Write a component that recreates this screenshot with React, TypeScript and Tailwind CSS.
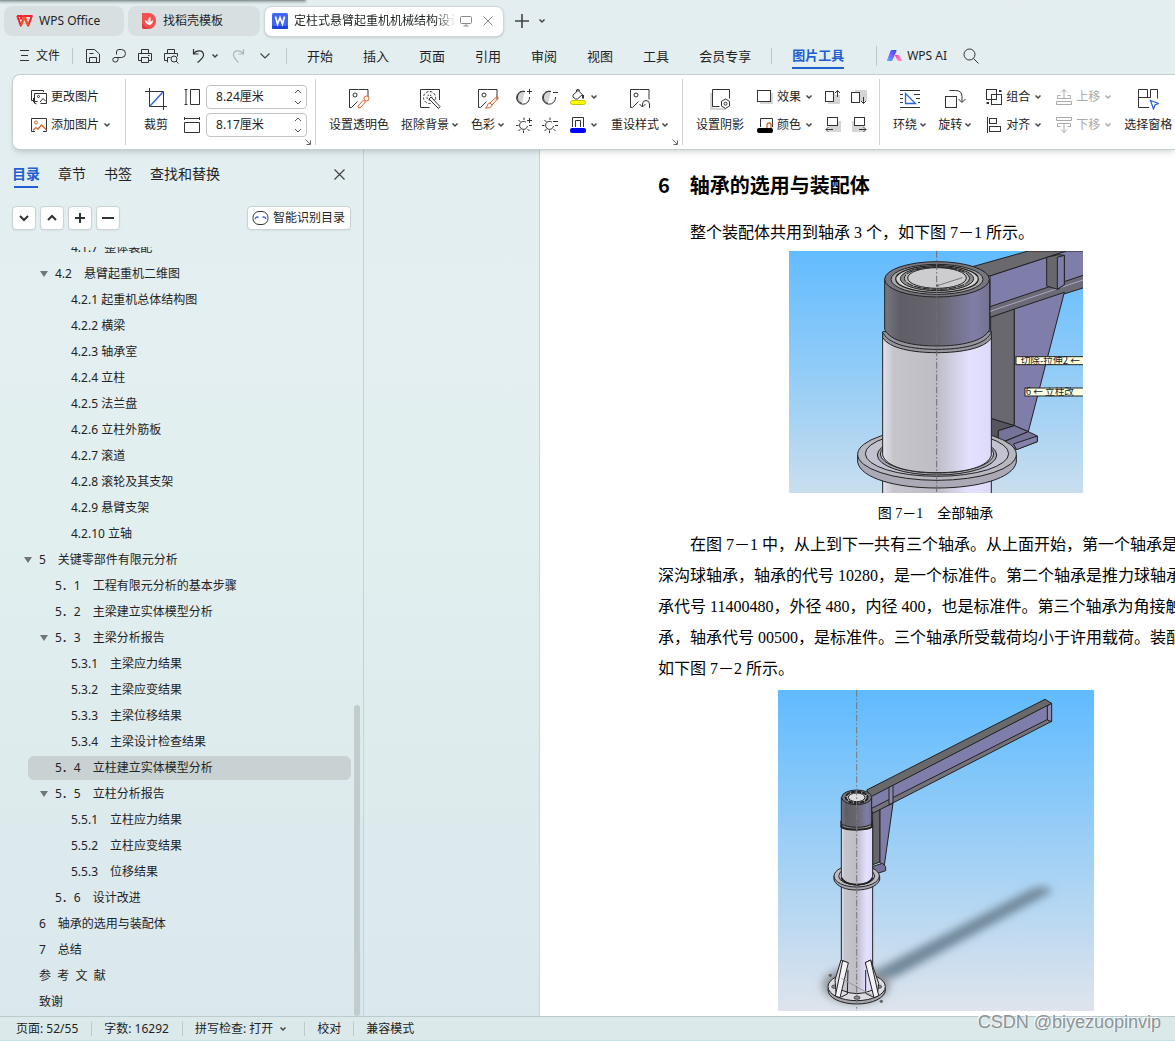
import React from "react";

type Kids = { children?: React.ReactNode };

function Ico({ s = 16, c = "#333333", children }: Kids & { s?: number; c?: string }) {
  return (
    <svg width={s} height={s} viewBox={`0 0 ${s} ${s}`} fill="none" stroke={c} strokeWidth="1" className="shrink-0" aria-hidden="true">
      {children}
    </svg>
  );
}

function Chev({ c = "#444444" }: { c?: string }) {
  return (
    <svg width="8" height="6" viewBox="0 0 8 6" fill="none" stroke={c} strokeWidth="1.5" className="shrink-0" aria-hidden="true">
      <path d="M1.5 1.5 4 4 6.5 1.5" />
    </svg>
  );
}

function Big({ icon, label, chev }: { icon: React.ReactNode; label: string; chev?: boolean }) {
  return (
    <button type="button" className="flex shrink-0 flex-col items-center whitespace-nowrap">
      <span className="flex h-8 items-center">{icon}</span>
      <span className="flex h-5 items-center gap-0.5">
        {label}
        {chev && <Chev />}
      </span>
    </button>
  );
}

function Small({ icon, label, chev, muted }: { icon: React.ReactNode; label: string; chev?: boolean; muted?: boolean }) {
  return (
    <button type="button" disabled={muted} className={`flex h-7 items-center gap-1 whitespace-nowrap ${muted ? "text-[#a9a9a9]" : ""}`}>
      {icon}
      {label}
      {chev && <Chev c={muted ? "#a9a9a9" : "#444444"} />}
    </button>
  );
}

function IconButton({ label, children, chev }: Kids & { label: string; chev?: boolean }) {
  return (
    <button type="button" aria-label={label} className="flex h-7 items-center gap-1">
      {children}
      {chev && <Chev />}
    </button>
  );
}

function Stack({ children }: Kids) {
  return <div className="flex shrink-0 flex-col items-start">{children}</div>;
}

function Group({ children, launcher, pad }: Kids & { launcher?: boolean; pad: string }) {
  return (
    <div className={`relative my-1 flex h-[66px] shrink-0 border-r border-[#d0d3d3] pt-1 ${pad}`}>
      {children}
      {launcher && (
        <button type="button" aria-label="更多设置" className="absolute right-1 bottom-0">
          <svg width="6" height="6" viewBox="0 0 6 6" fill="none" stroke="#666666" aria-hidden="true">
            <path d="M.5.5 5 5M5.5 1.5v4h-4" />
          </svg>
        </button>
      )}
    </div>
  );
}

function Spin({ label, value, children }: Kids & { label: string; value: string }) {
  return (
    <label className="flex h-7 items-center gap-1.5">
      {children}
      <span className="flex h-6 w-[101px] items-center rounded border border-[#bfc4c4] bg-white pr-1 pl-[9px]">
        <input aria-label={label} defaultValue={value} className="w-full min-w-0 bg-transparent outline-none" />
        <svg width="8" height="16" viewBox="0 0 8 16" fill="none" stroke="#555555" className="shrink-0" aria-hidden="true">
          <path d="M1 4 4 1 7 4M1 12l3 3 3-3" />
        </svg>
      </span>
    </label>
  );
}

const Sep = ({ cls }: { cls: string }) => <div className={`w-px shrink-0 bg-[#bccaca] ${cls}`} />;

function TitleTabs() {
  return (
    <header className="relative flex h-[38px] shrink-0 items-center gap-1 px-1 pt-1">
      <div className="absolute top-0 left-0 h-px w-[305px] bg-[#8c9899] shadow-[0_0_3px_1px_#8c9899]" />
      <button type="button" className="flex h-[30px] w-[120px] items-center gap-1.5 rounded-lg bg-[#d7dfe1] pl-3">
        <svg width="17" height="12" viewBox="0 0 17 12" aria-hidden="true">
          <path d="M1 1h5.2l-1.7 3.5M1.2 1l3.6 9.6L8.4 2l3.8 8.6L15.8 1H8l2 3.8" fill="none" stroke="#f5222d" strokeWidth="2" strokeLinejoin="round" />
          <path d="m5 10.4 3.4-8.2 3.7 8.2" fill="none" stroke="#f9541c" strokeWidth="1.8" strokeLinejoin="round" />
        </svg>
        WPS Office
      </button>
      <button type="button" className="flex h-[30px] w-[132px] items-center gap-1.5 rounded-lg bg-[#d7dfe1] pl-[13px]">
        <svg width="16" height="16" viewBox="0 0 16 16" aria-hidden="true">
          <path d="M1 0h7a7 8 0 0 1 0 16H3a2 2 0 0 1-2-2z" fill="#f4504e" />
          <path d="M1 10l6 6H3a2 2 0 0 1-2-2z" fill="#e13a3c" />
          <path d="M8 12C5 11 4 9 4 7c2 .5 3 1.500 3.500 3C7 7 7.500 4.500 9 3.500c1 1.500.8 3.500 0 5.500 1-1 1.800-1.500 3-1.500C12 10 10.500 12 8 12z" fill="#fff" />
        </svg>
        找稻壳模板
      </button>
      <div className="flex h-[31px] w-[240px] items-center rounded-lg border border-[#ccd8da] bg-white pr-2.5 pl-[7px] shadow-sm">
        <svg width="16" height="16" viewBox="0 0 16 16" aria-hidden="true">
          <rect width="16" height="16" rx="1.500" fill="#3f66f5" />
          <path d="M0 13h16v1.500a1.500 1.500 0 0 1-1.500 1.500h-13A1.500 1.500 0 0 1 0 14.500z" fill="#1d45d8" />
          <path d="m3.500 3.500 2 7.500L8 4.500 10.500 11l2-7.500" fill="none" stroke="#fff" strokeWidth="1.700" />
        </svg>
        <span className="ml-1.5 w-[162px] overflow-hidden whitespace-nowrap [mask-image:linear-gradient(to_right,black_88%,transparent)]">定柱式悬臂起重机机械结构设计</span>
        <svg width="12" height="12" viewBox="0 0 12 12" fill="none" stroke="#858b8d" className="ml-1" aria-hidden="true">
          <rect x=".5" y="1.500" width="11" height="7" rx="1" />
          <path d="M6 8.500V11M3.500 11h5" />
        </svg>
        <button type="button" aria-label="关闭标签" className="ml-auto">
          <svg width="10" height="10" viewBox="0 0 10 10" stroke="#858b8d" aria-hidden="true"><path d="m.5.5 9 9m0-9-9 9" /></svg>
        </button>
      </div>
      <button type="button" aria-label="新建标签" className="ml-[7px]">
        <svg width="14" height="14" viewBox="0 0 14 14" stroke="#444" strokeWidth="1.600" aria-hidden="true"><path d="M7 0v14M0 7h14" /></svg>
      </button>
      <button type="button" aria-label="标签列表" className="ml-[5px]"><Chev /></button>
    </header>
  );
}

const menus = ["开始", "插入", "页面", "引用", "审阅", "视图", "工具", "会员专享"];

function MenuBar() {
  return (
    <nav className="flex h-[35px] shrink-0 items-center">
      <button type="button" className="ml-[19px] flex shrink-0 items-center gap-1.5">
        <Ico s={11}><path d="M1 .5h9M2 5.500h7M1 10.500h9" /></Ico>
        文件
      </button>
      <Sep cls="ml-3 h-4" />
      <button type="button" aria-label="保存" className="ml-3"><Ico><path d="M1.500 1.500h8l5 4.500v8.500h-13zM4.500 14.500v-5h7v5M4.500 5.500h4" /></Ico></button>
      <button type="button" aria-label="输出为PDF" className="ml-2.5"><Ico><path d="M5.500 6.500V4A2.500 2.500 0 0 1 8 1.500h2.500a4 4 0 0 1 0 8H4A2.200 2.200 0 0 0 4 14h.5A2.500 2.500 0 0 0 7 11.500v-2" /></Ico></button>
      <button type="button" aria-label="打印" className="ml-2.5"><Ico><path d="M4.500 5.500v-4h7v4M4.500 12.500h-3v-7h13v7h-3M4.500 9.500h7v5h-7zM11 7.500h1.500" /></Ico></button>
      <button type="button" aria-label="打印预览" className="ml-2.5"><Ico><path d="M4.500 5.500v-4h7v4M4.500 12.500h-3v-7h13v3M4.500 14.500v-5h3" /><circle cx="11" cy="11" r="3" /><path d="m13 13 2.500 2.500" /></Ico></button>
      <button type="button" aria-label="撤销" className="ml-3"><Ico><path d="M2.500 1v5h5M2.500 6C5 2 12.500 1.500 12.500 7c0 3-2.500 4.500-6 7.500" strokeWidth="1.200" /></Ico></button>
      <button type="button" aria-label="撤销列表" className="ml-1"><Chev /></button>
      <button type="button" aria-label="恢复" className="ml-3"><Ico c="#a9b8b8"><path d="M12.500 1v5h-5M12.500 6C10 2 2.500 1.500 2.500 7c0 3 2.500 4.500 5 7.500" strokeWidth="1.200" /></Ico></button>
      <button type="button" aria-label="自定义快速访问" className="ml-[13px]">
        <svg width="10" height="6" viewBox="0 0 10 6" fill="none" stroke="#444" strokeWidth="1.200" aria-hidden="true"><path d="m.5.5 4.500 4.500L9.500.5" /></svg>
      </button>
      <Sep cls="ml-4 h-4" />
      <div className="ml-5 flex shrink-0 items-center gap-[30px] text-[13px]">
        {menus.map((m) => <button type="button" key={m}>{m}</button>)}
      </div>
      <Sep cls="ml-5 h-4" />
      <button type="button" className="ml-5 h-[26px] shrink-0 border-b-2 border-[#1f5fd0] text-[13px] leading-[18px] font-bold text-[#1f5fd0]">图片工具</button>
      <Sep cls="ml-8 h-5" />
      <button type="button" className="ml-2.5 flex shrink-0 items-center gap-1">
        <svg width="16" height="12" viewBox="0 0 16 12" aria-hidden="true">
          <defs>
            <linearGradient id="aiA" x1="1" y1="0" x2="0" y2="1"><stop offset="0" stopColor="#2b4dff" /><stop offset=".5" stopColor="#7a5cff" /><stop offset="1" stopColor="#39c6ff" /></linearGradient>
            <linearGradient id="aiB" x1="0" y1="0" x2="1" y2="1"><stop offset="0" stopColor="#ff3fa0" /><stop offset="1" stopColor="#ff9ad8" /></linearGradient>
          </defs>
          <path d="M4.500 0H9q1 0 .5 1L5 11H.5q-.8 0-.4-1L3.500 1q.3-1 1-1z" fill="url(#aiA)" />
          <path d="M7.500 5h3.500q1 0 1.500 1l3 5H11z" fill="url(#aiB)" />
        </svg>
        WPS AI
      </button>
      <button type="button" aria-label="搜索" className="ml-4"><Ico><circle cx="6.500" cy="6.500" r="5.500" /><path d="m10.500 10.500 5 5" /></Ico></button>
    </nav>
  );
}

const picture = <><path d="M10.500 1.500h9.500v10M1.500 19.500v-18h9M1.500 19.500h2l6-6" /><circle cx="7" cy="7" r="2" /></>;

function Ribbon() {
  return (
    <section aria-label="图片工具" className="relative z-10 mt-px ml-3 flex h-[76px] shrink-0 overflow-hidden rounded-l-lg border border-r-0 border-[#c3d0d0] bg-white shadow-md">
      <Group pad="w-[113px] pl-[18px]">
        <Stack>
          <Small label="更改图片" icon={<Ico><path d="M12.500 3V1.500h-12v10h2M3.500 14.500v-10h12v10h-6M2.500 9v4l3 2M2.500 12.500h4M9 13l3-3.500 3 3" /><circle cx="7.500" cy="7.500" r="1" /></Ico>} />
          <Small label="添加图片" chev icon={<Ico><path d="M4 14.500H.5v-13h15v13H12" /><circle cx="5" cy="5.500" r="1.500" stroke="#d4622a" /><path d="m2 13.500 3-3 2 1.500 3.500-4 5 5" stroke="#d4622a" strokeWidth="1.300" /></Ico>} />
        </Stack>
      </Group>
      <Group pad="gap-4 pl-[18px] pr-2" launcher>
        <Big label="裁剪" icon={<Ico s={22}><path d="M4.500 0v18.500H22M0 3.500h18.500V22" /><path d="m5 18 13-14" stroke="#2f62e0" strokeWidth="1.400" /></Ico>} />
        <Stack>
          <Spin label="高度" value="8.24厘米"><Ico><path d="M.5 .5h3M.5 15.500h3M2 .5v15M6.500.500h9v15h-9z" /></Ico></Spin>
          <Spin label="宽度" value="8.17厘米"><Ico><path d="M.5 0v3M15.500 0v3M.5 1.500h15M.5 5.500h15v10H.5z" /></Ico></Spin>
        </Stack>
      </Group>
      <Group pad="pl-[13px] pr-[13px]" launcher>
        <Big label="设置透明色" icon={<Ico s={22}>{picture}<path d="m10 18 5.500-6 2 2-5.500 6q-2 1-2-2z" stroke="#d4622a" /><circle cx="18.500" cy="10.500" r="2.500" stroke="#d4622a" fill="#fff" /></Ico>} />
        <div className="w-3 shrink-0" />
        <Big label="抠除背景" chev icon={<Ico s={22}><path d="M20.500 12V1.500h-19v18h9" /><circle cx="10.500" cy="9.500" r="6" strokeDasharray="2.500 1.500" /><circle cx="10.500" cy="9.500" r="2.500" strokeDasharray="2 1" /><path d="m10 11 2-2 9 9.500-1.500 2z" fill="#fff" /></Ico>} />
        <div className="w-3 shrink-0" />
        <Big label="色彩" chev icon={<Ico s={22}>{picture}<path d="m13 15 7-6.500 1.500 1.500-6.500 7M13 15l2 2q-1 3.500-6.500 3 2-1 2-3 .5-2 2.500-2z" stroke="#d4622a" /></Ico>} />
        <div className="w-[11px] shrink-0" />
        <Stack>
          <IconButton label="增加对比度"><Ico><path d="M9 2.500a6 6 0 0 0-3 12" fill="#d4d6d6" /><path d="M9 2.500A6.500 6.500 0 1 0 13.500 8M13.500 0v5M11 2.500h5" /></Ico></IconButton>
          <IconButton label="增加亮度"><Ico><path d="M10 5.200A4 4 0 1 0 11.500 9M8 .5V3M2.500 3l2 2M0 8.500h2.500M2.500 14l2-2M7.500 13.500V16M11.500 12l2 2M13.500 1v5M11 3.500h5M13 8.500h3" /></Ico></IconButton>
        </Stack>
        <div className="w-2.5 shrink-0" />
        <Stack>
          <IconButton label="降低对比度"><Ico><path d="M9 2.500a6 6 0 0 0-3 12" fill="#d4d6d6" /><path d="M9 2.500A6.500 6.500 0 1 0 13.500 8M11 3.500h5" /></Ico></IconButton>
          <IconButton label="降低亮度"><Ico><path d="M10 5.200A4 4 0 1 0 11.500 9M8 .5V3M2.500 3l2 2M0 8.500h2.500M2.500 14l2-2M7.500 13.500V16M11.500 12l2 2M11 4.500h5M13 8.500h3" /></Ico></IconButton>
        </Stack>
        <div className="w-3 shrink-0" />
        <Stack>
          <IconButton label="填充颜色" chev><Ico><path d="m3 6 5-4.500 4.500 4-5 4.500H5.500L3 8zM6.500 3V1l2-1 1 2" /><path d="M13 6v3.500" strokeWidth="2" /><rect x=".5" y="11.500" width="15" height="4" rx="2" fill="#ffff00" stroke="#c4c400" /></Ico></IconButton>
          <IconButton label="轮廓颜色" chev><Ico><path d="M2.500 10V.5h11V10M5.500 10V3.500h5V10" /><rect x="0" y="11" width="16" height="5" rx="2" fill="#0000ff" stroke="none" /></Ico></IconButton>
        </Stack>
        <div className="w-[13px] shrink-0" />
        <Big label="重设样式" chev icon={<Ico s={22}>{picture}<path d="m10.500 16 3 3 3-3M13.500 18.500v-2.500a3.500 3.500 0 0 1 7 0V20" /></Ico>} />
      </Group>
      <Group pad="pl-[13px] pr-3">
        <Big label="设置阴影" icon={<Ico s={22}><path d="M1 5h3v15h13v2H1z" fill="#d4d6d6" stroke="none" /><path d="M10.500 18.500h-7v-17h17v9" /><path d="m16.500 11 4 2.300v4.700l-4 2.500-4-2.500v-4.700z" fill="#fff" /><circle cx="16.500" cy="15.700" r="1.500" /></Ico>} />
        <div className="w-[13px] shrink-0" />
        <Stack>
          <Small label="效果" chev icon={<Ico><path d="M3 4h13v11H3z" fill="#d4d6d6" stroke="none" /><rect x=".5" y="1.500" width="13" height="11" fill="#fff" /></Ico>} />
          <Small label="颜色" chev icon={<Ico><path d="M3.500 10V1.500h12V10" /><path d="M10 11V8a2 2 0 0 1 4 0v3" stroke="#d4622a" strokeWidth="1.300" /><rect x="0" y="11" width="16" height="5" rx="2" fill="#000" stroke="none" /></Ico>} />
        </Stack>
        <div className="w-3 shrink-0" />
        <Stack>
          <IconButton label="阴影上移"><Ico><path d="M3 4h12v11H3z" fill="#d4d6d6" stroke="none" /><rect x=".5" y="2.500" width="8" height="10" fill="#fff" /><path d="M10 0h6v6h-6z" fill="#fff" stroke="none" /><path d="M12.500 8V1.500M10 4l2.500-2.500L15 4" /></Ico></IconButton>
          <IconButton label="阴影左移"><Ico><path d="M4 4h12v11H4z" fill="#d4d6d6" stroke="none" /><rect x="2.500" y=".5" width="10" height="8" fill="#fff" /><path d="M8 12.500H1M3.500 10 1 12.500 3.500 15" /></Ico></IconButton>
        </Stack>
        <div className="w-2.5 shrink-0" />
        <Stack>
          <IconButton label="阴影下移"><Ico><path d="M4 1h12v11H4z" fill="#d4d6d6" stroke="none" /><rect x=".5" y="3.500" width="8" height="10" fill="#fff" /><path d="M12.500 8v6.500M10 12l2.500 2.500L15 12" /></Ico></IconButton>
          <IconButton label="阴影右移"><Ico><path d="M1 4h12v11H1z" fill="#d4d6d6" stroke="none" /><rect x="3.500" y=".5" width="10" height="8" fill="#fff" /><path d="M8 12.500h7M12.500 10l2.500 2.500L12.500 15" /></Ico></IconButton>
        </Stack>
      </Group>
      <div className="my-1 flex shrink-0 pt-1 pl-[13px]">
        <Big label="环绕" chev icon={<Ico s={22}><path d="M1 2.500h20M1 19.500h20M1 6.500h3M1 10.500h3M1 14.500h3M15 6.500h6M17 10.500h4M19 14.500h2" /><path d="m6.500 5.500 10 10h-10z" stroke="#2f62e0" strokeWidth="1.300" /></Ico>} />
        <div className="w-[11px] shrink-0" />
        <Big label="旋转" chev icon={<Ico s={22}><rect x="1.500" y="8.500" width="11" height="11" /><path d="M5.500 2.500h6q6.500 0 6.500 6V14M14.500 11l3.500 3.500 3.500-3.500" /></Ico>} />
        <div className="w-3.5 shrink-0" />
        <Stack>
          <Small label="组合" chev icon={<Ico><rect x=".5" y=".5" width="10" height="10" /><rect x="5.500" y="5.500" width="10" height="10" /><path d="M13 2h2.500M.5 14H3" strokeWidth="2" /></Ico>} />
          <Small label="对齐" chev icon={<Ico><path d="M1.500 0v16" /><rect x="3.500" y="1.500" width="7" height="5" /><rect x="3.500" y="9.500" width="11" height="5" /></Ico>} />
        </Stack>
        <div className="w-3.5 shrink-0" />
        <Stack>
          <Small label="上移" chev muted icon={<Ico c="#a9a9a9"><path d="M.5 12.500h15v3H.5zM4.500 6.500h-3v3h13v-3h-3M8 9V.5M5 3.500l3-3 3 3" /></Ico>} />
          <Small label="下移" chev muted icon={<Ico c="#a9a9a9"><path d="M.5.5h15v3H.5zM4.500 9.500h-3v-3h13v3h-3M8 7v8.500M5 12.500l3 3 3-3" /></Ico>} />
        </Stack>
        <div className="w-3 shrink-0" />
        <Big label="选择窗格" icon={<Ico s={22}><path d="M12 19.500H1.500v-18h9v8M1.500 9.500h12v-8h7v9" /><path d="m13.500 12.500 8 3-3.500 1.500-1.500 4z" stroke="#2f62e0" strokeWidth="1.300" /></Ico>} />
      </div>
    </section>
  );
}

type Row = { t: string; d: number; open?: boolean; on?: boolean };
const rows: Row[] = [
  { t: "4.1.7  整体装配", d: 2 },
  { t: "4.2　悬臂起重机二维图", d: 1, open: true },
  { t: "4.2.1 起重机总体结构图", d: 2 },
  { t: "4.2.2 横梁", d: 2 },
  { t: "4.2.3 轴承室", d: 2 },
  { t: "4.2.4 立柱", d: 2 },
  { t: "4.2.5 法兰盘", d: 2 },
  { t: "4.2.6 立柱外筋板", d: 2 },
  { t: "4.2.7 滚道", d: 2 },
  { t: "4.2.8 滚轮及其支架", d: 2 },
  { t: "4.2.9 悬臂支架", d: 2 },
  { t: "4.2.10 立轴", d: 2 },
  { t: "5　关键零部件有限元分析", d: 0, open: true },
  { t: "5．1　工程有限元分析的基本步骤", d: 1 },
  { t: "5．2　主梁建立实体模型分析", d: 1 },
  { t: "5．3　主梁分析报告", d: 1, open: true },
  { t: "5.3.1　主梁应力结果", d: 2 },
  { t: "5.3.2　主梁应变结果", d: 2 },
  { t: "5.3.3　主梁位移结果", d: 2 },
  { t: "5.3.4　主梁设计检查结果", d: 2 },
  { t: "5．4　立柱建立实体模型分析", d: 1, on: true },
  { t: "5．5　立柱分析报告", d: 1, open: true },
  { t: "5.5.1　立柱应力结果", d: 2 },
  { t: "5.5.2　立柱应变结果", d: 2 },
  { t: "5.5.3　位移结果", d: 2 },
  { t: "5．6　设计改进", d: 1 },
  { t: "6　轴承的选用与装配体", d: 0 },
  { t: "7　总结", d: 0 },
  { t: "参  考  文  献", d: 0 },
  { t: "致谢", d: 0 },
];
const indent = ["pl-[11px]", "pl-[27px]", "pl-[43px]"];

function Square({ label, d }: { label: string; d: string }) {
  return (
    <button type="button" aria-label={label} className="flex size-6 items-center justify-center rounded border border-[#c9d3d4] bg-white shadow-xs">
      <svg width="12" height="12" viewBox="0 0 12 12" fill="none" stroke="#333" strokeWidth="2" aria-hidden="true"><path d={d} /></svg>
    </button>
  );
}

function Sidebar() {
  return (
    <aside className="flex w-[364px] shrink-0 flex-col border-r border-[#cfcfd0]">
      <div className="flex items-start gap-[18px] pt-3 pl-3 text-sm leading-6">
        <button type="button" className="flex flex-col items-center font-bold text-[#1f5fd0]">
          目录
          <span className="h-0.5 w-6 bg-[#1f5fd0]" />
        </button>
        <button type="button">章节</button>
        <button type="button">书签</button>
        <button type="button">查找和替换</button>
        <button type="button" aria-label="关闭" className="mr-[18px] ml-auto flex h-6 items-center">
          <svg width="11" height="11" viewBox="0 0 11 11" stroke="#444" strokeWidth="1.200" aria-hidden="true"><path d="m.5.500 10 10m0-10-10 10" /></svg>
        </button>
      </div>
      <div className="flex items-center gap-1 pt-[18px] pr-3 pl-3">
        <Square label="全部展开" d="m2 4 4 4 4-4" />
        <Square label="全部收起" d="m2 8 4-4 4 4" />
        <Square label="提升级别" d="M6 1v10M1 6h10" />
        <Square label="降低级别" d="M0 6h12" />
        <button type="button" className="ml-auto flex h-6 items-center gap-1 rounded border border-[#c9d3d4] bg-white pr-[5px] pl-1 shadow-xs">
          <svg width="17" height="16" viewBox="0 0 17 16" fill="none" stroke="#333" aria-hidden="true">
            <rect x="1" y="1.500" width="15" height="13" rx="6" />
            <path d="M3 9q1.500-3 3.500-1.500M14 9q-1.500-3-3.500-1.500" stroke="#2f62e0" strokeWidth="1.300" />
          </svg>
          智能识别目录
        </button>
      </div>
      <div className="mt-[17px] flex min-h-0 flex-1 pr-[3px] pl-6">
        <ul className="min-w-0 flex-1 overflow-hidden pl-1">
          {rows.map((r, i) => (
            <li key={r.t} className={i === 0 ? "-mt-[11px] h-[26px]" : "h-[26px]"}>
              <a href="#outline" className={`relative flex h-6 items-center rounded-md whitespace-pre ${indent[r.d]} ${r.on ? "bg-[#c8d2d3]" : ""}`}>
                {r.open && <span className="absolute -ml-[15px] border-x-4 border-t-[6px] border-x-transparent border-t-[#707577]" />}
                {r.t}
              </a>
            </li>
          ))}
        </ul>
        <div className="ml-[3px] flex w-1.5 flex-col justify-end">
          <div className="h-[36%] min-h-[311px] rounded-full bg-[#c3cccd]" />
        </div>
      </div>
    </aside>
  );
}

function BearingFigure() {
  return (
    <svg width="294" height="242" viewBox="27 33 882 726" stroke="#222" strokeWidth="3" role="img" aria-label="立柱轴承三维图" className="mx-auto mt-[3px] block">
      <defs>
        <linearGradient id="sky1" x1="0" y1="0" x2="0" y2="1"><stop offset="0" stopColor="#62bcff" /><stop offset=".5" stopColor="#92ccf7" /><stop offset="1" stopColor="#c9deee" /></linearGradient>
        <linearGradient id="col" x1="0" x2="1"><stop offset="0" stopColor="#e2e2ee" /><stop offset=".1" stopColor="#c6c5cb" /><stop offset=".5" stopColor="#bebdc6" /><stop offset=".8" stopColor="#e3e1ff" /><stop offset="1" stopColor="#dcdaf8" /></linearGradient>
        <linearGradient id="cap" x1="0" x2="1"><stop offset="0" stopColor="#77777f" /><stop offset=".15" stopColor="#5f5e66" /><stop offset=".5" stopColor="#67666e" /><stop offset=".85" stopColor="#807ea6" /><stop offset="1" stopColor="#73728f" /></linearGradient>
      </defs>
      <rect x="27" y="33" width="882" height="726" fill="url(#sky1)" stroke="none" />
      <path d="M560 85 745 33H860L630 108z" fill="#69696e" />
      <path d="M630 108 860 33h60v80L630 208z" fill="#7f7da9" />
      <path d="M630 200 912 105v38L630 232z" fill="#6b6a76" />
      <path d="M630 214 912 119" stroke="#a9a7c6" />
      <path d="m800 52 35-8 18 2v88l-20 14-33-10z" fill="#68676e" />
      <path d="m832 52 21-6v88l-21 14z" fill="#7f7da9" />
      <path d="m632 232 71-25v350l-71-22z" fill="#69686f" />
      <path d="m703 207 150-50-108 418-42-18z" fill="#7f7da9" />
      <path d="m632 535 71 22-48 15v30h-25z" fill="#56555d" />
      <path d="m655 572 48-15 42 18-80 32h-10z" fill="#75739a" />
      <path d="m675 604 70-29 27 13v17l-64 24z" fill="#75739a" />
      <path d="m700 612 72-24v17l-62 24z" fill="#8482ad" />
      <path d="M308 700h326v70H308z" fill="url(#col)" />
      <path d="M233 645v22c10 48 115 77 238 77s228-29 238-77v-22z" fill="#aaa9b5" />
      <ellipse cx="471" cy="643" rx="238" ry="78" fill="#b7b7bf" />
      <ellipse cx="471" cy="641" rx="215" ry="68" fill="#c3c2d0" />
      <ellipse cx="471" cy="645" rx="179" ry="60" fill="#a8a8b4" />
      <ellipse cx="471" cy="642" rx="170" ry="57" fill="#cac9dc" />
      <path d="M308 285v360c10 35 75 53 163 53s155-18 163-53V285z" fill="url(#col)" />
      <path d="M308 275v18c20 32 90 45 163 45s145-13 163-45v-18z" fill="#96959e" />
      <path d="M310 280c20 36 90 48 161 48s143-12 161-48" fill="none" />
      <path d="M314 118v150c15 36 85 50 157 50s142-14 158-50V118z" fill="url(#cap)" />
      <ellipse cx="471" cy="118" rx="157" ry="53" fill="#77767f" />
      <ellipse cx="471" cy="118" rx="138" ry="45" fill="#aaa" />
      <ellipse cx="471" cy="117" rx="124" ry="40" fill="#d2d2d2" strokeWidth="4" />
      <ellipse cx="471" cy="116" rx="110" ry="36" fill="#8c8c90" />
      <ellipse cx="471" cy="115" rx="98" ry="33" fill="#bbb" strokeDasharray="22 4" />
      <ellipse cx="471" cy="114" rx="88" ry="31" fill="#cdcdcf" />
      <path d="M470 33v726" stroke="#6f6f74" strokeDasharray="20 6 5 6" />
      <path d="m472 137 75-24" stroke="#777" />
      <circle cx="472" cy="137" r="4" fill="#666" stroke="none" />
      <rect x="708" y="350" width="210" height="24" fill="#ffffe1" />
      <rect x="735" y="444" width="190" height="24" fill="#ffffe1" />
      <g fill="#222" stroke="none" fontSize="29" fontFamily="Noto Sans CJK SC, sans-serif">
        <text x="722" y="372">切除-拉伸2 ←</text>
        <text x="737" y="466">6 ← 立柱改</text>
      </g>
    </svg>
  );
}

function CraneFigure() {
  return (
    <svg width="316" height="321" viewBox="24 30 948 963" stroke="#222" strokeWidth="3" role="img" aria-label="悬臂起重机装配图" className="mx-auto mt-1.5 block">
      <defs>
        <linearGradient id="sky2" x1="0" y1="0" x2="0" y2="1"><stop offset="0" stopColor="#5fbbff" /><stop offset=".5" stopColor="#9fd0f5" /><stop offset="1" stopColor="#dfe4ec" /></linearGradient>
        <filter id="soft" x="-30%" y="-30%" width="160%" height="160%"><feGaussianBlur stdDeviation="13" /></filter>
      </defs>
      <rect x="24" y="30" width="948" height="963" fill="url(#sky2)" stroke="none" />
      <g filter="url(#soft)" stroke="none">
        <path d="M300 880 790 625q50-12 55 10L370 895z" fill="#6f8799" />
        <ellipse cx="258" cy="915" rx="100" ry="54" fill="#8a9097" />
      </g>
      <ellipse cx="260" cy="930" rx="86" ry="42" fill="#a5a5ab" />
      <ellipse cx="260" cy="920" rx="86" ry="42" fill="#dcdce2" />
      <g fill="#8b8b92" strokeWidth="2">
        <ellipse cx="194" cy="920" rx="9" ry="5" /><ellipse cx="326" cy="920" rx="9" ry="5" /><ellipse cx="261" cy="953" rx="9" ry="5" />
      </g>
      <path d="M214 610v320q46 22 94 0V610z" fill="url(#col)" />
      <path d="m213 840-18 60 4 48 34-98zM302 840l24 70-4 36-36-98z" fill="#dedee6" />
      <path d="m218 842 17 6-25 105-14-5zM286 848l16-8 24 107-14 6z" fill="#f4f4f8" />
      <path d="m234 870-2 72-20 10M287 870v70l24 12" fill="none" />
      <path d="m214 895 90 50" stroke="#999" />
      <circle cx="181" cy="886" r="5" fill="#666" stroke="none" /><circle cx="334" cy="964" r="5" fill="#666" stroke="none" />
      <path d="m308 396 22-10v160l-22 8z" fill="#66656c" />
      <path d="m330 386 39-16-26 186-13-8z" fill="#7f7da9" />
      <path d="m306 560 32-10 9 10v12l-24 8z" fill="#75739a" />
      <path d="M192 588v12c8 20 36 30 68 30s60-10 69-30v-12z" fill="#a4a3ad" />
      <ellipse cx="260" cy="588" rx="68" ry="33" fill="#bdbcc6" />
      <ellipse cx="260" cy="588" rx="54" ry="27" fill="#d0d0dc" />
      <path d="M214 435v158c12 28 82 28 94 0V435z" fill="url(#col)" />
      <path d="M214 593c12 28 82 28 94 0" fill="none" strokeWidth="6" />
      <path d="M290 330 825 58l20 12-542 282z" fill="#69696c" />
      <path d="m303 350 530-274v50L303 396z" fill="#7f7da9" />
      <path d="m303 386 530-268 12 6-537 276z" fill="#74737c" />
      <path d="m832 78 13-8v55l-13-5z" fill="#8f8dae" />
      <path d="m357 322 12-6v52l-12 6z" fill="#8b89ad" />
      <path d="M214 425v15c14 12 80 12 92 0v-15z" fill="#888" strokeWidth="6" />
      <path d="M214 352v78c12 16 80 16 91 0v-78z" fill="url(#cap)" />
      <ellipse cx="260" cy="352" rx="45" ry="22" fill="#77767c" />
      <ellipse cx="260" cy="352" rx="33" ry="17" fill="#bbb" strokeWidth="6" strokeDasharray="14 3" />
      <ellipse cx="260" cy="352" rx="25" ry="13" fill="#dedee2" />
      <path d="M260 30v963" stroke="#77797d" strokeDasharray="20 6 5 6" />
    </svg>
  );
}

const lines = [
  "　　在图 7－1 中，从上到下一共有三个轴承。从上面开始，第一个轴承是",
  "深沟球轴承，轴承的代号 10280，是一个标准件。第二个轴承是推力球轴承",
  "承代号 11400480，外径 480，内径 400，也是标准件。第三个轴承为角接触",
  "承，轴承代号 00500，是标准件。三个轴承所受载荷均小于许用载荷。装配",
  "如下图 7－2 所示。",
];

function Doc() {
  return (
    <main className="min-w-0 flex-1 overflow-hidden pl-[175px]">
      <article className="min-h-full w-[792px] border-l border-[#cdd3d4] bg-white px-[118px] pt-5 font-['Liberation_Serif','Noto_Sans_CJK_SC',serif] text-base text-black">
        <h1 className="font-['Noto_Sans_CJK_SC',sans-serif] text-xl leading-[30px] font-bold">6　轴承的选用与装配体</h1>
        <p className="mt-[17px] leading-[31px] whitespace-nowrap">　　整个装配体共用到轴承 3 个，如下图 7－1 所示。</p>
        <BearingFigure />
        <p className="mt-[5px] text-center text-sm leading-[31px]">图 7－1　全部轴承</p>
        <p className="leading-[31px] whitespace-nowrap">
          {lines.map((l) => <span key={l} className="block">{l}</span>)}
        </p>
        <CraneFigure />
      </article>
    </main>
  );
}

function StatusBar() {
  return (
    <footer className="relative flex h-[25px] shrink-0 items-center border-t border-b border-t-[#bccbcd] border-b-[#c4e0e8] bg-[#dce9ea] pl-4 whitespace-nowrap">
      <span>页面: 52/55</span>
      <Sep cls="mr-3 ml-[13px] h-3.5" />
      <span>字数: 16292</span>
      <Sep cls="mr-3 ml-[13px] h-3.5" />
      <button type="button" className="flex items-center gap-1.5 pr-1">拼写检查: 打开 <Chev /></button>
      <Sep cls="mr-3 ml-[13px] h-3.5" />
      <button type="button">校对</button>
      <Sep cls="mx-3 h-3.5" />
      <span>兼容模式</span>
      <span className="absolute right-3.5 bottom-1.5 z-20 font-['Liberation_Sans',sans-serif] text-lg leading-6 text-[#8d9394] [text-shadow:-1px_-1px_0_#ffffff]">CSDN @biyezuopinvip</span>
    </footer>
  );
}

export default function App() {
  return (
    <div className="flex h-screen flex-col overflow-hidden bg-linear-to-b from-[#e4eef1] via-[#e2efef] to-[#dae7ec] font-['Noto_Sans','Noto_Sans_CJK_SC',sans-serif] text-xs leading-5 text-[#1f2324]">
      <TitleTabs />
      <MenuBar />
      <Ribbon />
      <div className="flex min-h-0 flex-1">
        <Sidebar />
        <Doc />
      </div>
      <StatusBar />
    </div>
  );
}
